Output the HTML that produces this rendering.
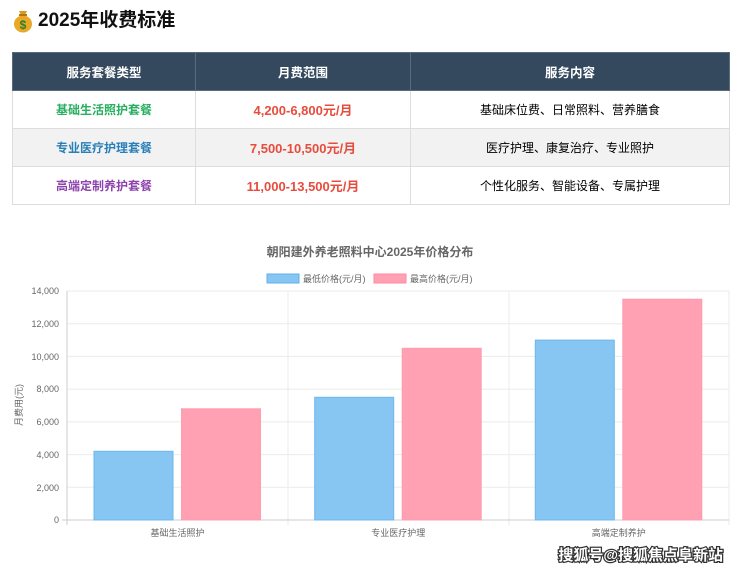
<!DOCTYPE html>
<html><head><meta charset="utf-8"><style>
body{margin:0;width:740px;height:569px;background:#fff;font-family:"Liberation Sans","Noto Sans CJK SC",sans-serif;position:relative;overflow:hidden}
h1{position:absolute;left:38px;top:8px;margin:0;font-size:19px;font-weight:bold;color:#111;line-height:26px}
table{position:absolute;left:12px;top:52px;width:718px;border-collapse:collapse;font-size:12px}
td,th{border:1px solid #ddd;text-align:center;height:37px;padding:0}
th{background:#34495e;color:#fff;font-weight:bold;font-size:12.5px;border-color:#5a6b7c}
tr:nth-child(3) td{background:#f2f2f2}
.p{color:#e74c3c;font-weight:bold;font-size:13px}
</style></head><body>
<svg style="position:absolute;left:12px;top:9px" width="22" height="24" viewBox="0 0 22 24"><path d="M7 2h8l-2 4h-4z" fill="#d89b1a"/><ellipse cx="11" cy="15" rx="9" ry="8.5" fill="#e9a825"/><rect x="7" y="5" width="8" height="2" fill="#b07812"/><text x="11" y="20" font-size="12" text-anchor="middle" fill="#2e7d32" font-weight="bold" font-family="Liberation Sans">$</text></svg>
<h1>2025年收费标准</h1>
<table>
<tr><th style="width:182px">服务套餐类型</th><th style="width:214px">月费范围</th><th>服务内容</th></tr>
<tr><td style="color:#27ae60;font-weight:bold">基础生活照护套餐</td><td class="p">4,200-6,800元/月</td><td>基础床位费、日常照料、营养膳食</td></tr>
<tr><td style="color:#2980b9;font-weight:bold">专业医疗护理套餐</td><td class="p">7,500-10,500元/月</td><td>医疗护理、康复治疗、专业照护</td></tr>
<tr><td style="color:#8e44ad;font-weight:bold">高端定制养护套餐</td><td class="p">11,000-13,500元/月</td><td>个性化服务、智能设备、专属护理</td></tr>
</table>
<svg style="position:absolute;left:0;top:0" width="740" height="569" font-family="Liberation Sans,Noto Sans CJK SC,sans-serif">
<text x="370" y="256" text-anchor="middle" font-size="12" font-weight="bold" fill="#666">朝阳建外养老照料中心2025年价格分布</text>
<rect x="267" y="274" width="32" height="9" fill="#87c5f2" stroke="#5fb0ec"/><text x="303" y="282" font-size="9" fill="#666">最低价格(元/月)</text>
<rect x="374" y="274" width="32" height="9" fill="#ffa0b3" stroke="#ff8aa3"/><text x="410" y="282" font-size="9" fill="#666">最高价格(元/月)</text>
<g stroke="#ebebeb">
<line x1="67" y1="291" x2="729" y2="291"/><line x1="67" y1="323.7" x2="729" y2="323.7"/><line x1="67" y1="356.4" x2="729" y2="356.4"/><line x1="67" y1="389.1" x2="729" y2="389.1"/><line x1="67" y1="421.9" x2="729" y2="421.9"/><line x1="67" y1="454.6" x2="729" y2="454.6"/><line x1="67" y1="487.3" x2="729" y2="487.3"/>
<line x1="288" y1="291" x2="288" y2="525"/><line x1="509" y1="291" x2="509" y2="525"/><line x1="729" y1="291" x2="729" y2="525"/>
</g>
<line x1="67" y1="291" x2="67" y2="525" stroke="#ccc"/><line x1="62" y1="520" x2="729" y2="520" stroke="#ccc"/>
<g font-size="9" fill="#666" text-anchor="end">
<text x="59" y="294">14,000</text><text x="59" y="327">12,000</text><text x="59" y="360">10,000</text><text x="59" y="392">8,000</text><text x="59" y="425">6,000</text><text x="59" y="458">4,000</text><text x="59" y="491">2,000</text><text x="59" y="523">0</text>
</g>
<text transform="translate(22,405) rotate(-90)" text-anchor="middle" font-size="9" fill="#666">月费用(元)</text>
<g fill="#87c5f2" stroke="#6bb8ef">
<rect x="94" y="451.3" width="79" height="68.7"/><rect x="314.7" y="397.3" width="79" height="122.7"/><rect x="535.3" y="340.1" width="79" height="179.9"/>
</g>
<g fill="#ffa0b3" stroke="#ff9cb0">
<rect x="181.5" y="408.8" width="79" height="111.2"/><rect x="402.2" y="348.3" width="79" height="171.7"/><rect x="622.8" y="299.2" width="79" height="220.8"/>
</g>
<g font-size="9" fill="#666" text-anchor="middle">
<text x="177.5" y="536">基础生活照护</text><text x="398.2" y="536">专业医疗护理</text><text x="618.8" y="536">高端定制养护</text>
</g>
<text x="723" y="560" text-anchor="end" font-size="15" font-weight="bold" fill="#fff" stroke="#333" stroke-width="2.5" paint-order="stroke">搜狐号@搜狐焦点阜新站</text>
</svg>
</body></html>
